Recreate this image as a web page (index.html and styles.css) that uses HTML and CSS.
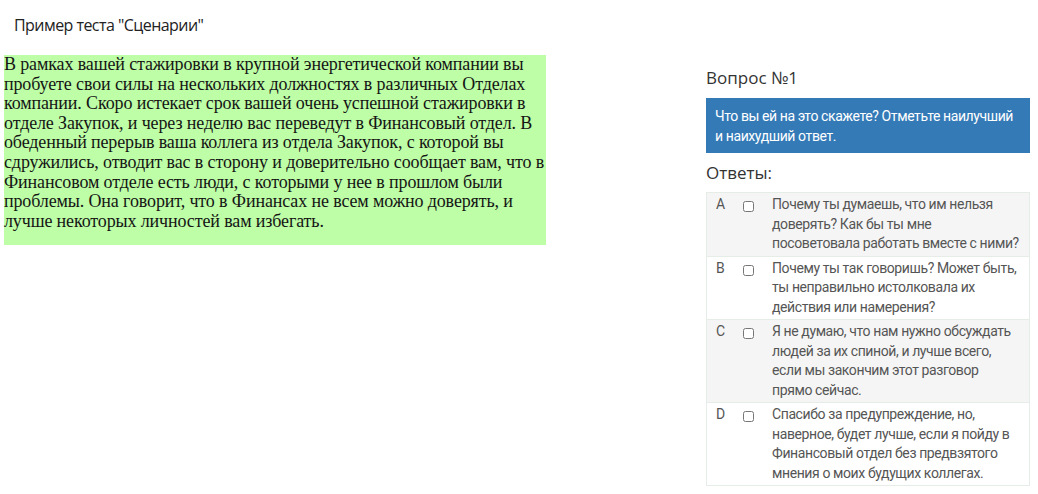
FILE: index.html
```html
<!DOCTYPE html>
<html lang="ru">
<head>
  <meta charset="UTF-8" />
  <meta name="viewport" content="width=device-width, initial-scale=1.0"/>
  <title>Пример теста "Сценарии"</title>
  <link rel="stylesheet" href="styles.css">
</head>
<body>

  <header class="page-title">Пример теста "Сценарии"</header>

  <div class="test-layout">
    <div class="scenario">В рамках вашей стажировки в крупной энергетической компании вы
пробуете свои силы на нескольких должностях в различных Отделах
компании. Скоро истекает срок вашей очень успешной стажировки в
отделе Закупок, и через неделю вас переведут в Финансовый отдел. В
обеденный перерыв ваша коллега из отдела Закупок, с которой вы
сдружились, отводит вас в сторону и доверительно сообщает вам, что в
Финансовом отделе есть люди, с которыми у нее в прошлом были
проблемы. Она говорит, что в Финансах не всем можно доверять, и
лучше некоторых личностей вам избегать.</div>

    <div class="question">
      <h2 class="question-title">Вопрос №1</h2>
      <div class="question-text">Что вы ей на это скажете? Отметьте наилучший и наихудший ответ.</div>
      <h3 class="answers-title">Ответы:</h3>
      <div class="answers">
        <label class="answer">
          <span class="answer-letter">A</span>
          <span class="answer-check"><input type="checkbox" /></span>
          <span class="answer-text">Почему ты думаешь, что им нельзя доверять? Как бы ты мне посоветовала работать вместе с ними?</span>
        </label>
        <label class="answer">
          <span class="answer-letter">B</span>
          <span class="answer-check"><input type="checkbox" /></span>
          <span class="answer-text">Почему ты так говоришь? Может быть, ты неправильно истолковала их действия или намерения?</span>
        </label>
        <label class="answer">
          <span class="answer-letter">C</span>
          <span class="answer-check"><input type="checkbox" /></span>
          <span class="answer-text">Я не думаю, что нам нужно обсуждать людей за их спиной, и лучше всего, если мы закончим этот разговор прямо сейчас.</span>
        </label>
        <label class="answer">
          <span class="answer-letter">D</span>
          <span class="answer-check"><input type="checkbox" /></span>
          <span class="answer-text">Спасибо за предупреждение, но, наверное, будет лучше, если я пойду в Финансовый отдел без предвзятого мнения о моих будущих коллегах.</span>
        </label>
      </div>
    </div>
  </div>

</body>
</html>
```

FILE: styles.css
```css
body {
  margin: 0;
  padding: 0;
  background: #fff;
  font-family: 'Open Sans', sans-serif;
  color: #333;
}
.page-title {
  padding: 14px 14px 0;
  height: 41px;
  box-sizing: border-box;
  font-size: 16px;
  line-height: 22px;
  letter-spacing: -0.55px;
  color: #222;
}
.test-layout {
  display: flex;
  align-items: flex-start;
  padding: 0 8px 0 4px;
}
.scenario {
  width: 542px;
  height: 190px;
  margin-top: 14px;
  background-color: #bdfea6;
  font-family: 'Liberation Serif', serif;
  font-size: 18px;
  line-height: 19.6px;
  letter-spacing: -0.13px;
  white-space: pre;
  color: #151515;
}
.question {
  width: 324px;
  margin-left: auto;
}
.question-title {
  margin: 25px 0 0;
  font-size: 17px;
  font-weight: normal;
  line-height: 24px;
  color: #333;
}
.question-text {
  margin-top: 8px;
  padding: 8px 12px 7px 9px;
  background-color: #337ab7;
  color: white;
  font-family: Roboto, sans-serif;
  font-size: 14px;
  line-height: 20px;
  letter-spacing: -0.4px;
}
.answers-title {
  margin: 8px 0 0;
  font-size: 17px;
  font-weight: normal;
  line-height: 24px;
  color: #333;
}
.answers {
  margin-top: 7px;
  border: 1px solid #e6ece6;
  border-top: none;
  font-family: Roboto, sans-serif;
  font-size: 14px;
  line-height: 19.5px;
  letter-spacing: -0.4px;
  color: #555;
}
.answer {
  display: flex;
  padding: 2px 9px 2px 0;
  border-top: 1px solid #e6ece6;
}
.answer:nth-child(odd) {
  background-color: #f5f5f5;
}
.answer-letter {
  width: 36px;
  padding-left: 9px;
  box-sizing: border-box;
}
.answer-check {
  width: 29px;
  flex-shrink: 0;
}
.answer-check input {
  width: 11px;
  height: 11px;
  margin: 6px 0 0;
}
.answer-text {
  flex: 1;
}
```
